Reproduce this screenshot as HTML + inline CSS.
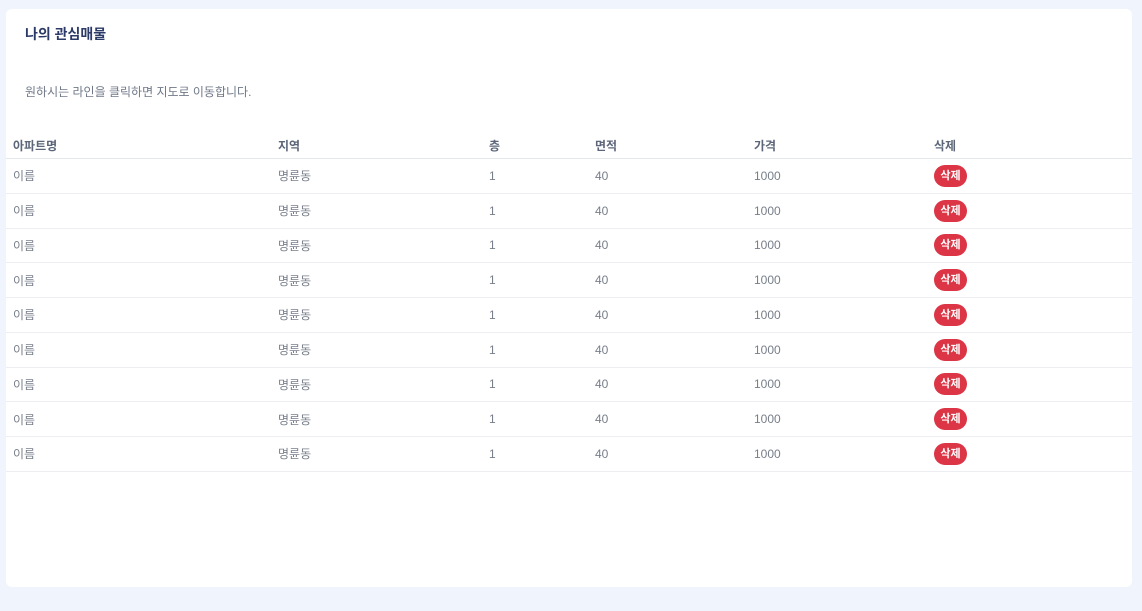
<!DOCTYPE html><html><head><meta charset="utf-8"><style>
body{margin:0;background:#f0f4fd;font-family:"Liberation Sans","Noto Sans CJK KR",sans-serif;}
.card{position:absolute;left:6px;top:9px;width:1126px;height:578px;background:#fff;border-radius:6px;}
h1{position:absolute;left:19px;top:15px;margin:0;font-size:14px;font-weight:bold;color:#2b3a67;}
.sub{position:absolute;left:19px;top:74px;font-size:12px;color:#6f7888;}
table{position:absolute;left:0;top:124px;width:1126px;border-collapse:collapse;font-size:12px;}
th{text-align:left;color:#5c6678;font-weight:bold;height:25px;padding:0;border-bottom:1px solid #e4e7ec;}
td{height:33.75px;padding:0;color:#777e8a;border-bottom:1px solid #eceef2;}
.b{display:inline-block;background:#dc3545;color:#fff;font-size:11px;font-weight:bold;border-radius:11px;width:33px;height:22px;line-height:22px;text-align:center;}
</style></head><body><div class="card">
<h1>나의 관심매물</h1>
<div class="sub">원하시는 라인을 클릭하면 지도로 이동합니다.</div>
<table><colgroup><col style="width:7px"><col style="width:265px"><col style="width:211px"><col style="width:106px"><col style="width:159px"><col style="width:180px"><col></colgroup>
<tr><th></th><th>아파트명</th><th>지역</th><th>층</th><th>면적</th><th>가격</th><th>삭제</th></tr>
<tr><td></td><td>이름</td><td>명륜동</td><td>1</td><td>40</td><td>1000</td><td><span class="b">삭제</span></td></tr>
<tr><td></td><td>이름</td><td>명륜동</td><td>1</td><td>40</td><td>1000</td><td><span class="b">삭제</span></td></tr>
<tr><td></td><td>이름</td><td>명륜동</td><td>1</td><td>40</td><td>1000</td><td><span class="b">삭제</span></td></tr>
<tr><td></td><td>이름</td><td>명륜동</td><td>1</td><td>40</td><td>1000</td><td><span class="b">삭제</span></td></tr>
<tr><td></td><td>이름</td><td>명륜동</td><td>1</td><td>40</td><td>1000</td><td><span class="b">삭제</span></td></tr>
<tr><td></td><td>이름</td><td>명륜동</td><td>1</td><td>40</td><td>1000</td><td><span class="b">삭제</span></td></tr>
<tr><td></td><td>이름</td><td>명륜동</td><td>1</td><td>40</td><td>1000</td><td><span class="b">삭제</span></td></tr>
<tr><td></td><td>이름</td><td>명륜동</td><td>1</td><td>40</td><td>1000</td><td><span class="b">삭제</span></td></tr>
<tr><td></td><td>이름</td><td>명륜동</td><td>1</td><td>40</td><td>1000</td><td><span class="b">삭제</span></td></tr>
</table></div></body></html>
